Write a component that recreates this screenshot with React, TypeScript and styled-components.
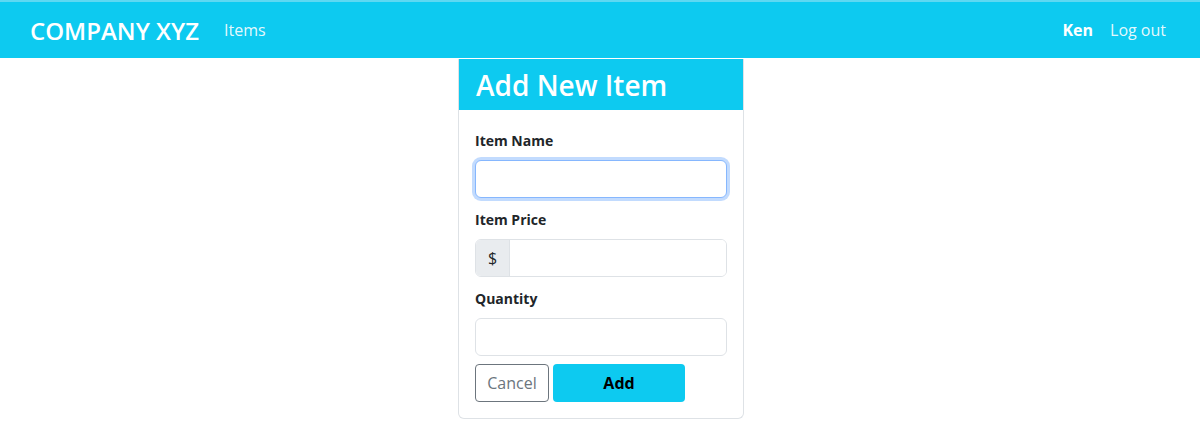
import React, { useState } from 'react';
import styled, { createGlobalStyle } from 'styled-components';

const colors = {
  info: '#0dcaf0',
  border: '#dee2e6',
  text: '#212529',
  muted: '#6c757d',
  addon: '#e9ecef',
};

const GlobalStyle = createGlobalStyle`
  body {
    margin: 0;
    background: #fff;
    font-family: "Open Sans", "Noto Sans", sans-serif;
    color: ${colors.text};
  }
  * {
    box-sizing: border-box;
  }
`;

export default function App() {
  const [name, setName] = useState('');
  const [price, setPrice] = useState('');
  const [quantity, setQuantity] = useState('');

  return (
    <>
      <GlobalStyle />
      <Navbar>
        <NavLeft>
          <Brand>COMPANY XYZ</Brand>
          <NavLink>Items</NavLink>
        </NavLeft>
        <NavRight>
          <NavUser>Ken</NavUser>
          <NavLink>Log out</NavLink>
        </NavRight>
      </Navbar>
      <Main>
        <Card>
          <CardHeader>Add New Item</CardHeader>
          <CardBody>
            <Field>
              <Label>Item Name</Label>
              <Input focused value={name} onChange={e => setName(e.target.value)} />
            </Field>
            <Field>
              <Label>Item Price</Label>
              <InputGroup>
                <Addon>$</Addon>
                <GroupInput value={price} onChange={e => setPrice(e.target.value)} />
              </InputGroup>
            </Field>
            <Field>
              <Label>Quantity</Label>
              <Input value={quantity} onChange={e => setQuantity(e.target.value)} />
            </Field>
            <BtnRow>
              <CancelBtn>Cancel</CancelBtn>
              <AddBtn>Add</AddBtn>
            </BtnRow>
          </CardBody>
        </Card>
      </Main>
    </>
  );
}

const Navbar = styled.nav`
  display: flex;
  align-items: center;
  justify-content: space-between;
  height: 58px;
  padding: 0 34px 0 30px;
  background-color: ${colors.info};
  border-top: 2px solid #5ed8f2;
`;
const NavLeft = styled.div`
  display: flex;
  align-items: center;
  gap: 25px;
`;
const NavRight = styled.div`
  display: flex;
  align-items: center;
  gap: 17px;
`;
const Brand = styled.span`
  font-size: 24px;
  font-weight: 600;
  color: #fff;
`;
const NavLink = styled.a`
  font-size: 16px;
  color: rgba(255, 255, 255, 0.9);
  cursor: pointer;
`;
const NavUser = styled.span`
  font-size: 16px;
  font-weight: 700;
  color: #fff;
`;
const Main = styled.main`
  display: flex;
  justify-content: center;
  padding-left: 2px;
  padding-top: 1px;
`;
const Card = styled.div`
  width: 286px;
  border: 1px solid ${colors.border};
  border-top: none;
  border-radius: 0 0 6px 6px;
  background: #fff;
  overflow: hidden;
`;
const CardHeader = styled.h2`
  margin: 0;
  height: 51px;
  padding: 0 17px;
  display: flex;
  align-items: center;
  background-color: ${colors.info};
  color: #fff;
  font-size: 28px;
  font-weight: 600;
`;
const CardBody = styled.div`
  padding: 19px 16px 16px 16px;
`;
const Field = styled.div`
  display: flex;
  flex-direction: column;
  margin-bottom: 10px;
`;
const Label = styled.label`
  font-size: 14px;
  font-weight: 700;
  line-height: 24px;
  margin-bottom: 7px;
`;
const Input = styled.input<{ focused?: boolean }>`
  height: 38px;
  width: 100%;
  padding: 6px 12px;
  font-size: 16px;
  border-radius: 6px;
  border: 1px solid ${p => (p.focused ? '#86b7fe' : colors.border)};
  box-shadow: ${p => (p.focused ? '0 0 0 3px rgba(13, 110, 253, 0.25)' : 'none')};
  outline: none;
`;
const InputGroup = styled.div`
  display: flex;
  height: 38px;
  border: 1px solid ${colors.border};
  border-radius: 6px;
  overflow: hidden;
`;
const Addon = styled.span`
  flex: 0 0 34px;
  display: flex;
  align-items: center;
  justify-content: center;
  font-size: 16px;
  background-color: ${colors.addon};
  border-right: 1px solid ${colors.border};
`;
const GroupInput = styled.input`
  flex: 1;
  min-width: 0;
  border: none;
  outline: none;
  padding: 6px 12px;
  font-size: 16px;
`;
const BtnRow = styled.div`
  display: flex;
  gap: 4px;
  margin-top: -2px;
`;
const CancelBtn = styled.button`
  width: 74px;
  height: 38px;
  border: 1px solid ${colors.muted};
  border-radius: 4px;
  background: #fff;
  color: ${colors.muted};
  font-family: inherit;
  font-size: 16px;
`;
const AddBtn = styled.button`
  width: 132px;
  height: 38px;
  border: none;
  border-radius: 4px;
  background-color: ${colors.info};
  color: #000;
  font-family: inherit;
  font-size: 16px;
  font-weight: 700;
`;
